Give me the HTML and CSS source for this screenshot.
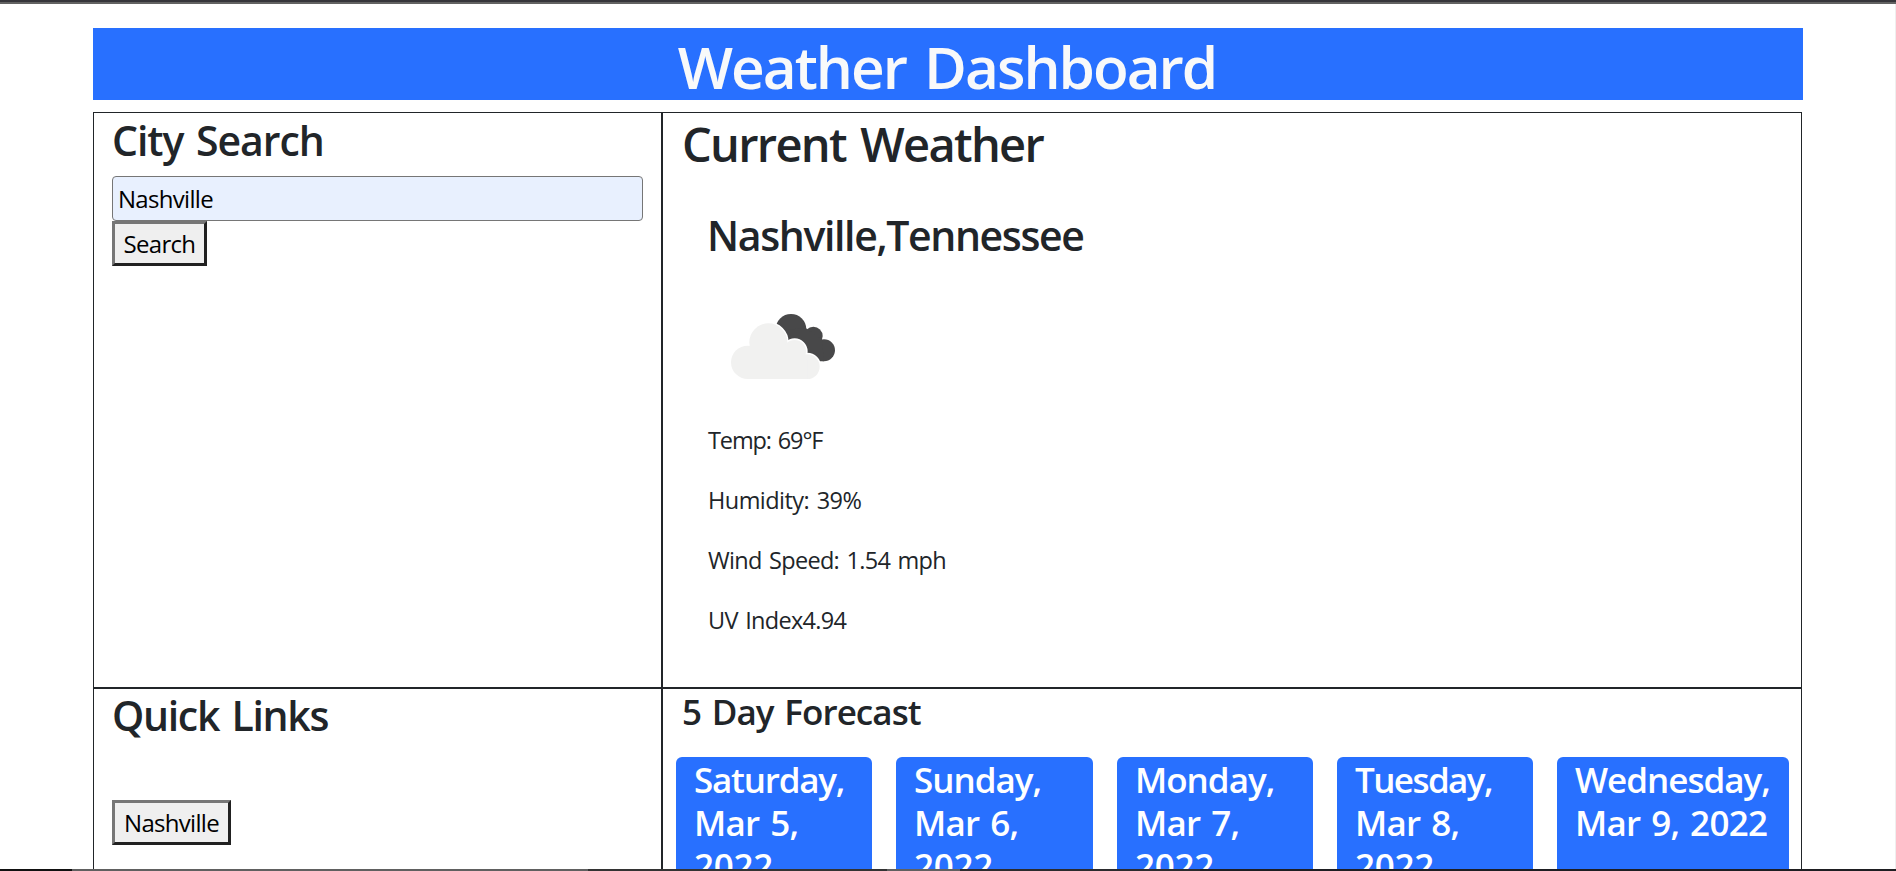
FILE: index.html
```
<!DOCTYPE html>
<html lang="en">
<head>
<meta charset="utf-8">
<title>Weather Dashboard</title>
<link rel="stylesheet" href="styles.css">
</head>
<body>
<div class="topbar"></div>
<main class="container">
  <header class="banner"><h1 class="title">Weather Dashboard</h1></header>
  <div class="board">
    <section class="cell search">
      <h3 class="h3 t-city">City Search</h3>
      <input class="field" type="text" value="Nashville">
      <button class="btn btn-search">Search</button>
    </section>
    <section class="cell current">
      <h2 class="h2">Current Weather</h2>
      <div class="details">
        <h3 class="h3 t-place">Nashville,Tennessee</h3>
        <svg class="cloud" viewBox="0 0 480 330">
          <g fill="#484849">
            <circle cx="273" cy="118" r="46"/><circle cx="340" cy="138" r="28"/><circle cx="372" cy="181" r="33"/>
            <path d="M240 120L318 115L366 150L372 214H300Z"/>
          </g>
          <g fill="#fff" stroke="#fff" stroke-width="8">
            <circle cx="205" cy="157" r="57"/><circle cx="284" cy="184" r="35"/><circle cx="322" cy="229" r="37"/>
          </g>
          <g fill="#f1f1f0">
            <circle cx="205" cy="157" r="57"/><circle cx="284" cy="184" r="34"/><circle cx="322" cy="230" r="37"/><circle cx="143" cy="217" r="50"/>
            <path d="M143 180L205 150L284 170L322 210V267H143Z"/>
          </g>
        </svg>
        <p class="row t-temp">Temp: 69°F</p>
        <p class="row t-hum">Humidity: 39%</p>
        <p class="row t-wind">Wind Speed: 1.54 mph</p>
        <p class="row t-uv">UV Index4.94</p>
      </div>
    </section>
    <section class="cell links">
      <h3 class="h3 t-quick">Quick Links</h3>
      <button class="btn btn-link">Nashville</button>
    </section>
    <section class="cell forecast">
      <h4 class="h4">5 Day Forecast</h4>
      <div class="cards">
        <div class="card"><span class="day sat">Saturday,</span> <span class="date">Mar 5,</span> <span class="year">2022</span></div>
        <div class="card"><span class="day">Sunday,</span> <span class="date">Mar 6,</span> <span class="year">2022</span></div>
        <div class="card"><span class="day">Monday,</span> <span class="date">Mar 7,</span> <span class="year">2022</span></div>
        <div class="card"><span class="day tue">Tuesday,</span> <span class="date">Mar 8,</span> <span class="year">2022</span></div>
        <div class="card"><span class="day">Wednesday,</span> <span class="date">Mar 9, 2022</span></div>
      </div>
    </section>
  </div>
</main>
<div class="bottombar"></div>
</body>
</html>
```
FILE: styles.css
```
* { box-sizing: border-box; }
body {
  margin: 0;
  height: 871px;
  overflow: hidden;
  display: flex;
  flex-direction: column;
  background: #fff;
  color: #212529;
  font: 24px/36px "Open Sans", "Noto Sans", sans-serif;
}
h1, h2, h3, h4, p { margin: 0; font-weight: 600; }
.topbar { flex: none; height: 4px; background: #36353a; border-bottom: 2px solid #626262; }
.container { flex: 1; min-height: 0; overflow: hidden; padding: 24px 92px 0 93px; border-right: 1px solid #efefef; }
.banner { height: 72px; background: #2870ff; color: #f8f9fa; text-align: center; }
.title { padding: 2px 2px 0 0; font-size: 58.5px; font-weight: 650; line-height: 72px; letter-spacing: -2px; word-spacing: 5px; }
.board {
  width: 1709px;
  margin-top: 12px;
  border: 1px solid #212529;
  display: grid;
  grid-template-columns: 569px 1138px;
  grid-template-rows: 576px 400px;
}
.search { border-right: 2px solid #212529; border-bottom: 2px solid #212529; padding: 2px 18px 0; }
.current { border-bottom: 2px solid #212529; padding: 2px 20px 0 19px; }
.links { border-right: 2px solid #212529; padding: 1px 18px 0; }
.forecast { padding: 1px 12px 0 13px; }
.h2 { font-size: 47px; line-height: 58px; letter-spacing: -1.7px; word-spacing: 4px; }
.h3 { font-size: 41px; line-height: 50px; letter-spacing: -1.05px; word-spacing: 3px; }
.t-place { letter-spacing: -1.37px; }
.t-quick { letter-spacing: -1.3px; }
.h4 { padding-left: 6px; font-size: 35px; line-height: 43px; letter-spacing: -0.93px; word-spacing: 2.5px; }
.field {
  display: block;
  width: 531px;
  height: 45px;
  margin-top: 11px;
  padding: 0 5px;
  border: 1px solid #767676;
  border-radius: 4px;
  background: #e8f0fe;
  color: #000;
  font: inherit;
  letter-spacing: -0.7px;
}
.btn {
  display: block;
  height: 45px;
  padding: 0;
  border: 3px solid;
  border-color: #767676 #212121 #212121 #767676;
  background: #efefef;
  color: #000;
  font: inherit;
  letter-spacing: -0.7px;
}
.btn-search { width: 95px; }
.btn-link { width: 119px; margin-top: 60px; }
.details { padding: 37px 0 0 25px; }
.cloud { display: block; width: 160px; height: 110px; margin: 30px 0 22px -7px; }
.row { height: 36px; margin-bottom: 24px; padding-left: 1px; font-size: 23.5px; font-weight: 400; letter-spacing: -0.7px; word-spacing: 2px; }
.t-temp { letter-spacing: -1.13px; }
.t-hum { letter-spacing: -0.55px; }
.cards {
  margin-top: 24px;
  display: grid;
  grid-template-columns: 196px 197px 196px 196px 232px;
  column-gap: 24px;
}
.card {
  height: 300px;
  padding: 1px 0 0 18px;
  border-radius: 6px;
  background: #2870ff;
  color: #fff;
  font-size: 35px;
  font-weight: 600;
  line-height: 43px;
  white-space: nowrap;
}
.day, .date, .year { display: block; }
.day { letter-spacing: -1px; }
.sat { letter-spacing: -1.22px; }
.tue { letter-spacing: -1.58px; }
.date { letter-spacing: -0.75px; word-spacing: 2.5px; }
.year { letter-spacing: -0.3px; }
.bottombar {
  flex: none;
  height: 2px;
  background: linear-gradient(90deg, #111 72px, #606060 72px 588px, #333 588px 887px, #606060 887px 960px, #2b2b2e 960px 1200px, #1e1e22 1200px);
}
```
